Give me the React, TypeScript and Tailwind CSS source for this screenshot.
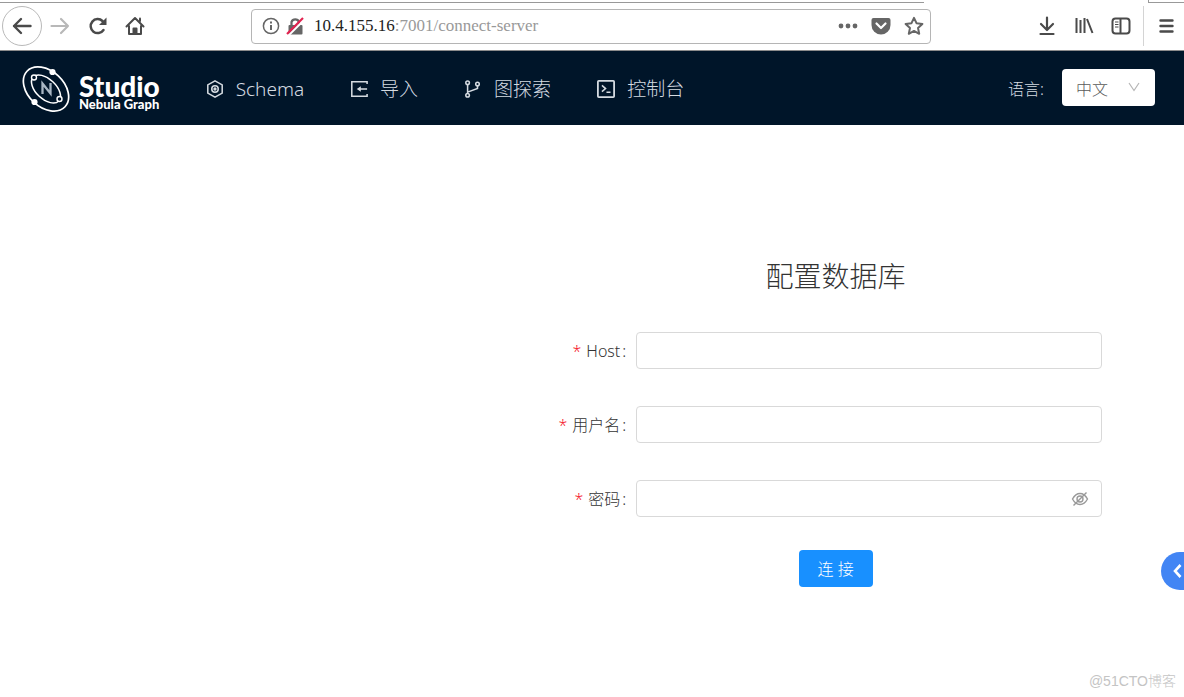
import { useState } from 'react';
import type { ReactNode } from 'react';

interface NavItem {
  label: string;
  href: string;
  icon: ReactNode;
}

interface Field {
  id: string;
  label: string;
  type: string;
}

function Logo() {
  return (
    <svg viewBox="0 0 48 48" className="h-12 w-12 shrink-0" fill="none" stroke="#fff" aria-hidden="true">
      <g transform="rotate(43 24 24)">
        <ellipse cx="24" cy="24" rx="26" ry="18" strokeWidth="1.7" />
        <ellipse cx="24" cy="24" rx="17.5" ry="10" strokeWidth="1.5" />
      </g>
      <circle cx="30.5" cy="7" r="3.1" fill="#fff" stroke="none" />
      <circle cx="12.5" cy="37" r="3.1" fill="#fff" stroke="none" />
      <circle cx="12" cy="12.5" r="2.5" fill="#001529" strokeWidth="1.4" />
      <circle cx="37.5" cy="34" r="2.5" fill="#001529" strokeWidth="1.4" />
      <path d="M20.5 29V18.5L28.5 28.5V18" stroke="#a9b7c4" strokeWidth="2.3" />
    </svg>
  );
}

const navItems: NavItem[] = [
  {
    label: 'Schema',
    href: '#schema',
    icon: (
      <>
        <path d="M10 1L18 5.5V14.5L10 19L2 14.5V5.5Z" />
        <circle cx="10" cy="10" r="3.6" />
        <circle cx="10" cy="10" r="1" />
      </>
    ),
  },
  {
    label: '导入',
    href: '#import',
    icon: (
      <>
        <path d="M19 4.5V2H2V18H19V15.5" />
        <path d="M19 10H10" />
        <path d="M7.5 10L12 7V13Z" fill="currentColor" stroke="none" />
      </>
    ),
  },
  {
    label: '图探索',
    href: '#explore',
    icon: (
      <>
        <circle cx="4" cy="3" r="2" />
        <circle cx="4" cy="17" r="2" />
        <circle cx="15" cy="4.5" r="2" />
        <path d="M4 5V15M15 6.500V9.5L4 13.5" />
      </>
    ),
  },
  {
    label: '控制台',
    href: '#console',
    icon: (
      <>
        <rect x="1" y="1" width="18" height="18" rx="1" strokeWidth="2" />
        <path d="M5.5 6L9.5 9.5L5.5 13M10.5 13.5H15" />
      </>
    ),
  },
];

const fields: Field[] = [
  { id: 'host', label: 'Host', type: 'text' },
  { id: 'username', label: '用户名', type: 'text' },
  { id: 'password', label: '密码', type: 'password' },
];

function BrowserBar() {
  return (
    <div className="border-b border-[#8c8c8c] bg-white text-[#4a4a4a]">
      <div className="flex h-[3px] justify-between">
        <div className="w-[78%] border-b border-[#999]" />
        <div className="w-[3%] border-b border-l border-[#999]" />
      </div>
      <div className="flex h-[47px] items-center pr-2 pb-px pl-[2px]">
        <div className="flex items-center gap-2">
          <button aria-label="Back" className="flex size-10 items-center justify-center rounded-full border border-[#b9b9b9]">
            <svg viewBox="0 0 20 20" className="size-5" fill="none" stroke="currentColor" strokeWidth="2.4" strokeLinecap="round" strokeLinejoin="round">
              <path d="M18.5 10H2M9 3L2 10L9 17" />
            </svg>
          </button>
          <button aria-label="Forward" className="text-[#b8b8b8]">
            <svg viewBox="0 0 20 20" className="size-5" fill="none" stroke="currentColor" strokeWidth="2.2" strokeLinecap="round" strokeLinejoin="round">
              <path d="M1.5 10H18M11 3L18 10L11 17" />
            </svg>
          </button>
          <button aria-label="Reload" className="ml-[10px]">
            <svg viewBox="0 0 20 20" className="size-5" fill="none" stroke="currentColor" strokeWidth="2.5" strokeLinecap="round">
              <path d="M15.5 14A7 7 0 1 1 14.5 5" />
              <path d="M18.5 1.5V9H11Z" fill="currentColor" stroke="none" />
            </svg>
          </button>
          <button aria-label="Home" className="ml-[9px]">
            <svg viewBox="0 0 20 20" className="size-5" fill="none" stroke="currentColor" strokeWidth="2" strokeLinecap="round" strokeLinejoin="round">
              <path d="M1.5 10.5L10 2L18.5 10.5M4 10V18H16V10" />
              <path d="M8.5 18V12.5H11.5V18" fill="currentColor" />
              <path d="M15 2.5V5" />
            </svg>
          </button>
        </div>

        <div className="mr-[106px] ml-[106px] flex h-[35px] flex-1 items-center rounded border border-[#b5b5b5] pr-[6px] pl-[10px] text-[#666]">
          <svg viewBox="0 0 18 18" className="size-[18px]" fill="none" stroke="currentColor" strokeWidth="1.5">
            <circle cx="9" cy="9" r="7.6" />
            <path d="M9 8V13M9 4.5V6.5" strokeWidth="2" />
          </svg>
          <svg viewBox="0 0 18 18" className="ml-[6px] size-[18px]" fill="none">
            <path d="M5.500 8V5A4 4 0 0 1 13 5V8" stroke="currentColor" strokeWidth="2.2" />
            <rect x="2.5" y="8" width="14" height="9.5" rx="1" fill="currentColor" />
            <path d="M2.500 18.500L18.500 2.500" stroke="#fff" strokeWidth="2" />
            <path d="M1 17L17 1" stroke="#e2224f" strokeWidth="2.2" />
          </svg>
          <p className="ml-[10px] flex-1 font-['Liberation_Serif',serif] text-[17px] text-[#999]">
            <span className="text-[#222]">10.4.155.16</span>:7001/connect-server
          </p>
          <div className="flex items-center gap-[13px]">
            <button aria-label="Page actions">
              <svg viewBox="0 0 20 20" className="size-5" fill="currentColor">
                <circle cx="3" cy="10" r="2.4" />
                <circle cx="10" cy="10" r="2.4" />
                <circle cx="17" cy="10" r="2.4" />
              </svg>
            </button>
            <button aria-label="Save to Pocket">
              <svg viewBox="0 0 20 20" className="size-5" fill="none">
                <path d="M2.5 2H17.5Q19.5 2 19.5 4V9A9.5 9.5 0 0 1 0.5 9V4Q0.5 2 2.5 2Z" fill="currentColor" />
                <path d="M5.5 7.5L10 12L14.5 7.5" stroke="#fff" strokeWidth="2.2" strokeLinecap="round" strokeLinejoin="round" />
              </svg>
            </button>
            <button aria-label="Bookmark">
              <svg viewBox="0 0 20 20" className="size-5" fill="none" stroke="currentColor" strokeWidth="2" strokeLinejoin="round">
                <path d="M10 1.8L12.5 7.2L18.4 7.9L14 11.9L15.2 17.8L10 14.9L4.8 17.8L6 11.9L1.6 7.9L7.5 7.2Z" />
              </svg>
            </button>
          </div>
        </div>

        <div className="flex items-center gap-[17px]">
          <button aria-label="Downloads">
            <svg viewBox="0 0 20 20" className="size-5" fill="none" stroke="currentColor" strokeWidth="2.2" strokeLinecap="round" strokeLinejoin="round">
              <path d="M10 1.5V13.5M4 8L10 14L16 8M3.500 18H16.500" />
            </svg>
          </button>
          <button aria-label="Library">
            <svg viewBox="0 0 20 20" className="size-5" fill="none" stroke="currentColor" strokeWidth="2">
              <path d="M2.5 2V17M6.5 4V17M10.5 2V17M13 3L18.500 17" />
            </svg>
          </button>
          <button aria-label="Sidebars">
            <svg viewBox="0 0 20 20" className="size-5" fill="none" stroke="currentColor" strokeWidth="2">
              <rect x="1.5" y="2.5" width="17" height="15" rx="3" />
              <path d="M9.5 3V17" />
              <path d="M4 6H7.5M4 8.5H7.5M4 11H7.500" strokeWidth="1" />
            </svg>
          </button>
        </div>
        <button aria-label="Menu" className="ml-3 flex h-10 items-center border-l border-[#d4d4d4] pl-3">
          <svg viewBox="0 0 20 20" className="size-5" fill="none" stroke="currentColor" strokeWidth="2.4" strokeLinecap="round">
            <path d="M4.5 4.5H16.5M4.5 10H16.5M4.5 15.5H16.5" />
          </svg>
        </button>
      </div>
    </div>
  );
}

function Header() {
  const [language, setLanguage] = useState('zh');

  return (
    <header className="flex h-[74px] items-center bg-[#001529] pr-[29px] pl-[22px] text-[#d5dbe1]">
      <a href="#home" className="flex items-center gap-[9px] pt-[2px] text-white">
        <Logo />
        <span className="flex flex-col pt-[6px] font-['Lato',sans-serif] font-black">
          <span className="text-[28px] leading-6">Studio</span>
          <span className="text-[13px] leading-3">Nebula Graph</span>
        </span>
      </a>
      <nav className="ml-[46px] flex items-center gap-[46px] pt-[2px]">
        {navItems.map((item) => (
          <a key={item.href} href={item.href} className="flex items-center gap-3 text-[19px] whitespace-nowrap">
            <svg viewBox="0 0 20 20" className="size-[18px]" fill="none" stroke="currentColor" strokeWidth="1.7">
              {item.icon}
            </svg>
            {item.label}
          </a>
        ))}
      </nav>
      <div className="ml-auto flex items-center gap-[18px] pb-px">
        <label htmlFor="language" className="pt-[2px] text-base">语言:</label>
        <div className="relative">
          <select
            id="language"
            value={language}
            onChange={(e) => setLanguage(e.target.value)}
            className="h-[37px] w-[93px] appearance-none rounded bg-white pt-[2px] pl-[14px] text-base text-[#595959]"
          >
            <option value="zh">中文</option>
            <option value="en">English</option>
          </select>
          <svg viewBox="0 0 12 12" className="pointer-events-none absolute top-3 right-[15px] size-3" fill="none" stroke="#b5b5b5" strokeWidth="1.2">
            <path d="M1 2L6 9.5L11 2" />
          </svg>
        </div>
      </div>
    </header>
  );
}

function ConnectForm() {
  const [values, setValues] = useState<Record<string, string>>({});
  const [showPassword, setShowPassword] = useState(false);

  return (
    <form
      onSubmit={(e) => e.preventDefault()}
      className="mt-[131px] mr-[82px] ml-auto flex w-[45%] flex-col text-base text-[#333]"
    >
      <h1 className="mb-9 text-center text-[28px] leading-10">配置数据库</h1>
      <div className="flex flex-col gap-[37px]">
        {fields.map((field) => (
          <div key={field.id} className="flex items-center gap-[10px]">
            <label htmlFor={field.id} className="flex w-[57px] shrink-0 justify-end pt-px whitespace-nowrap">
              <span className="mr-[5px] text-[#f5222d]">*</span>
              {field.label}
              <span className="ml-[2px]">:</span>
            </label>
            <div className="relative flex-1">
              <input
                id={field.id}
                type={field.type === 'password' && showPassword ? 'text' : field.type}
                value={values[field.id] || ''}
                onChange={(e) => setValues({ ...values, [field.id]: e.target.value })}
                className="block h-[37px] w-full rounded border border-[#d9d9d9] bg-white px-3 outline-none focus:border-[#1890ff]"
              />
              {field.type === 'password' && (
                <button
                  type="button"
                  aria-label="显示密码"
                  onClick={() => setShowPassword(!showPassword)}
                  className="absolute top-[10px] right-[13px] text-[#999]"
                >
                  <svg viewBox="0 0 18 18" className="size-[18px]" fill="none" stroke="currentColor" strokeWidth="1.4">
                    <path d="M1.5 9Q4.5 3.5 9 3.5T16.5 9Q13.5 14.5 9 14.5T1.5 9Z" />
                    <circle cx="9" cy="9" r="3" />
                    <path d="M2.5 15.5L15.5 2.5" />
                  </svg>
                </button>
              )}
            </div>
          </div>
        ))}
      </div>
      <button type="submit" className="mt-[33px] h-[37px] self-center rounded bg-[#1890ff] px-[19px] pt-px text-base text-white">
        连 接
      </button>
    </form>
  );
}

export default function App() {
  return (
    <div className="flex min-h-screen flex-col bg-white font-['Noto_Sans','Noto_Sans_CJK_SC',sans-serif] font-light">
      <BrowserBar />
      <Header />
      <main className="flex flex-1 flex-col">
        <ConnectForm />
      </main>
      <footer className="px-2 pb-[6px] text-right font-['Liberation_Sans','Noto_Sans_CJK_SC',sans-serif] text-[14px] leading-5 text-[#c4c4c4]">
        @51CTO博客
      </footer>
      <button
        aria-label="展开侧栏"
        className="fixed right-0 bottom-[107px] flex h-[38px] w-[23px] items-center justify-end rounded-l-full bg-[#4285f4] text-white"
      >
        <svg viewBox="0 0 12 16" className="h-4 w-3" fill="none" stroke="currentColor" strokeWidth="2.6">
          <path d="M8.5 2L3 8L8.5 14" />
        </svg>
      </button>
    </div>
  );
}
